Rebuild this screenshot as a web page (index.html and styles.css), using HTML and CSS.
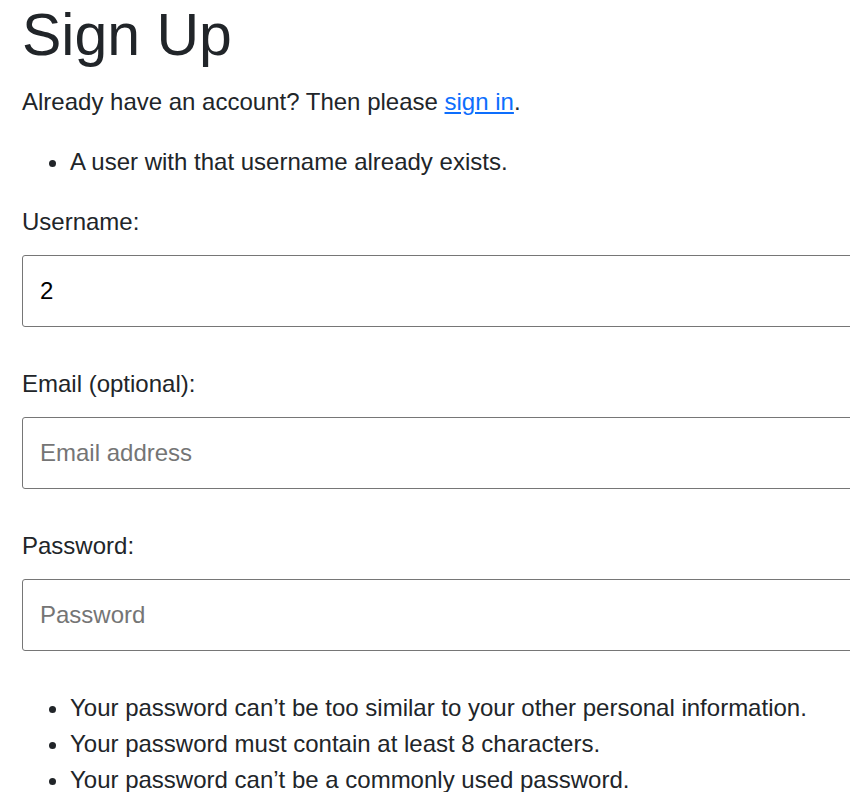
FILE: index.html
```html
<!DOCTYPE html>
<html lang="en">
<head>
<meta charset="utf-8">
<title>Sign Up</title>
<link rel="stylesheet" href="styles.css">
</head>
<body>
<main class="page">
  <h1 class="title">Sign Up</h1>
  <p class="lead">Already have an account? Then please <a href="#" class="link">sign in</a>.</p>
  <ul class="errors">
    <li>A user with that username already exists.</li>
  </ul>
  <form class="form">
    <div class="field">
      <label class="label" for="username">Username:</label>
      <input class="input" id="username" type="text" value="2">
    </div>
    <div class="field">
      <label class="label" for="email">Email (optional):</label>
      <input class="input" id="email" type="email" placeholder="Email address">
    </div>
    <div class="field">
      <label class="label" for="password">Password:</label>
      <input class="input" id="password" type="password" placeholder="Password">
    </div>
    <ul class="help">
      <li>Your password can’t be too similar to your other personal information.</li>
      <li>Your password must contain at least 8 characters.</li>
      <li>Your password can’t be a commonly used password.</li>
    </ul>
  </form>
</main>
</body>
</html>
```

FILE: styles.css
```css
html, body {
  margin: 0;
  padding: 0;
  overflow: hidden;
  background: #ffffff;
}

body {
  font-family: "Liberation Sans", Arial, sans-serif;
  font-size: 24px;
  line-height: 36px;
  color: #212529;
}

.page {
  padding: 0 22px;
  width: 1000px;
}

.title {
  font-size: 59px;
  font-weight: 400;
  line-height: 70px;
  margin: 0 0 14px 0;
}

.lead {
  margin: 0 0 24px 0;
}

.link {
  color: #0d6efd;
  text-decoration: underline;
}

.errors,
.help {
  margin: 0 0 24px 0;
  padding-left: 48px;
}

.form {
  margin: 0;
}

.field {
  display: flex;
  flex-direction: column;
  align-items: flex-start;
  gap: 15px;
  margin-bottom: 39px;
}

.label {
  display: block;
}

.input {
  box-sizing: border-box;
  width: 100%;
  height: 72px;
  padding: 17px 17px;
  font-family: "Liberation Sans", Arial, sans-serif;
  font-size: 24px;
  line-height: 36px;
  color: #000000;
  border: 1px solid #767676;
  border-radius: 3px;
  background: #ffffff;
  outline: none;
}

.input::placeholder {
  color: #757575;
  opacity: 1;
}
```
